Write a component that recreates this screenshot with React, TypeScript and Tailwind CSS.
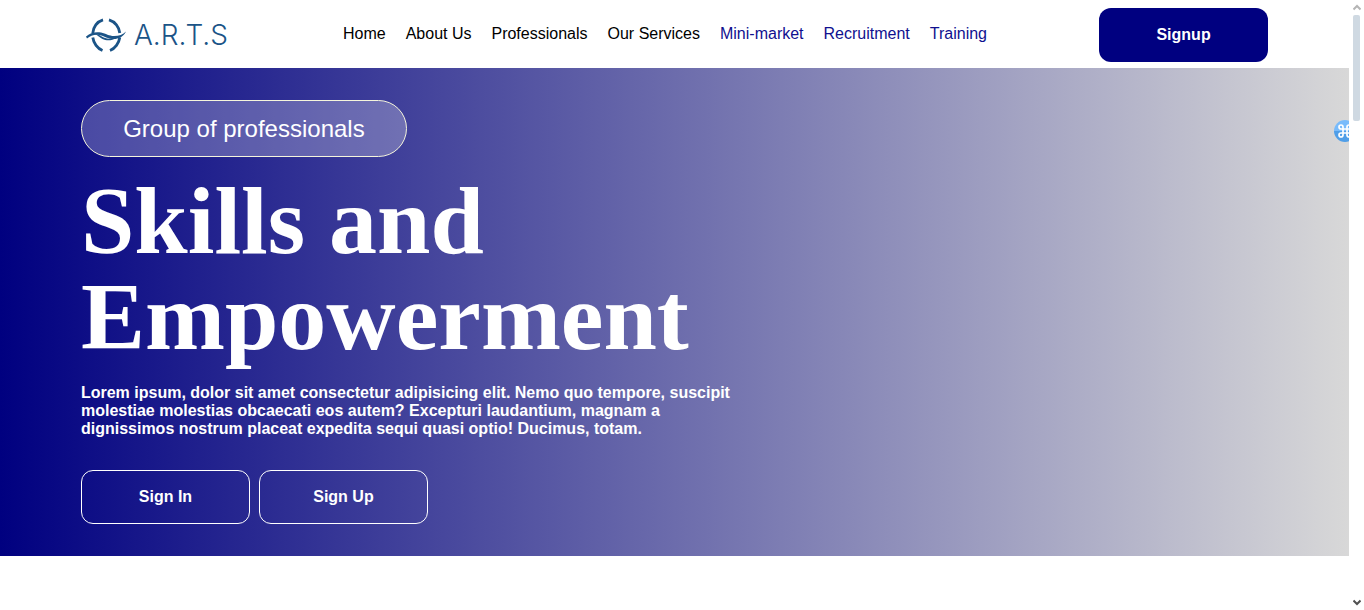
import React from "react";

const links = [
  { label: "Home", accent: false },
  { label: "About Us", accent: false },
  { label: "Professionals", accent: false },
  { label: "Our Services", accent: false },
  { label: "Mini-market", accent: true },
  { label: "Recruitment", accent: true },
  { label: "Training", accent: true },
];

function Logo() {
  return (
    <a href="#" className="flex w-[150px] items-center gap-[7px] pl-1 text-[#1b5487]">
      <svg className="shrink-0" width="42" height="36" viewBox="0 0 42 36" fill="currentColor" aria-hidden="true">
        <g fill="none" stroke="currentColor" strokeWidth="2.8">
          <path d="M18 2.8C12 4.500 8.200 10 7.800 16" />
          <path d="M7.800 20.500C8.500 26 12.500 31.500 17.500 33.500" />
          <path d="M24 2.800C30 4.500 34.200 10 34.800 16" />
          <path d="M34.800 20.500C34 26 30 31.500 25 33.500" />
        </g>
        <path d="M1 19.500C5 15.500 11 14.500 16 15.500C21 16.500 24 19 29 19C34 19 38 17.500 41 14.500C38.500 20 33 22.500 27 22C21 21.500 18 18 12.500 17.800C8.500 17.600 5 19 2 21.500Z" />
        <path d="M10 17C15 17 17 20.500 22 21.500C25 22.300 28 22 31 21C27 24 21 23.800 17.500 22C14.500 20.500 13 18.500 10 17Z" />
      </svg>
      <span className="font-['Inter'] text-[28px] leading-9 font-light">A.R.T.S</span>
    </a>
  );
}

function Header() {
  return (
    <header className="flex items-center justify-between bg-white px-[6%] pt-2 pb-1.5">
      <Logo />
      <nav className="flex gap-5 pb-0.5">
        {links.map((l) => (
          <a key={l.label} href="#" className={l.accent ? "text-[#10108f]" : "text-black"}>
            {l.label}
          </a>
        ))}
      </nav>
      <button className="h-[54px] w-[169px] rounded-xl bg-[#000080] font-bold text-white">Signup</button>
    </header>
  );
}

function Hero() {
  return (
    <section className="bg-linear-to-r/srgb from-[#000080] to-[#d8d8d8] px-[6%] py-8 text-white">
      <p className="h-[57px] w-[326px] rounded-full border border-[#f5f5dc] bg-white/25 text-center text-2xl leading-[55px]">
        Group of professionals
      </p>
      <h1 className="mt-4 max-w-[660px] font-['Liberation_Serif',serif] text-8xl leading-24 font-bold">
        Skills and Empowerment
      </h1>
      <p className="mt-[19px] max-w-[660px] leading-[18px] font-bold">
        Lorem ipsum, dolor sit amet consectetur adipisicing elit. Nemo quo tempore, suscipit molestiae molestias
        obcaecati eos autem? Excepturi laudantium, magnam a dignissimos nostrum placeat expedita sequi quasi optio!
        Ducimus, totam.
      </p>
      <div className="mt-8 flex gap-[9px]">
        <button className="h-[54px] w-[169px] rounded-xl border border-white font-bold">Sign In</button>
        <button className="h-[54px] w-[169px] rounded-xl border border-white font-bold">Sign Up</button>
      </div>
    </section>
  );
}

function ScrollRail() {
  return (
    <div className="flex w-[15px] shrink-0 flex-col items-center justify-between bg-white" aria-hidden="true">
      <div className="flex flex-col items-center gap-1 pt-1">
        <svg width="8" height="7" viewBox="0 0 8 7" fill="none" stroke="#b5b5b5" strokeWidth="2">
          <path d="M0.500 5.500L4 2L7.500 5.500" />
        </svg>
        <div className="h-[106px] w-[7px] rounded-xs bg-[#cfd9e2]" />
      </div>
      <svg className="mb-1" width="8" height="7" viewBox="0 0 8 7" fill="none" stroke="#505050" strokeWidth="2">
        <path d="M0.500 1.500L4 5L7.500 1.500" />
      </svg>
    </div>
  );
}

export default function App() {
  return (
    <div className="flex min-h-screen bg-white font-['Liberation_Sans',sans-serif] text-base">
      <main className="relative min-w-0 flex-1 overflow-hidden">
        <Header />
        <Hero />
        <button
          aria-label="Shortcuts"
          className="absolute top-30 -right-[7px] flex size-[22px] items-center justify-center rounded-full bg-linear-to-b from-[#78bbfb] from-50% to-[#4f9ee8] to-50%"
        >
          <svg width="16" height="16" viewBox="0 0 24 24" fill="none" stroke="white" strokeWidth="2.500" aria-hidden="true">
            <path d="M15 6v12a3 3 0 1 0 3-3H6a3 3 0 1 0 3 3V6a3 3 0 1 0-3 3h12a3 3 0 1 0-3-3" />
          </svg>
        </button>
      </main>
      <ScrollRail />
    </div>
  );
}
